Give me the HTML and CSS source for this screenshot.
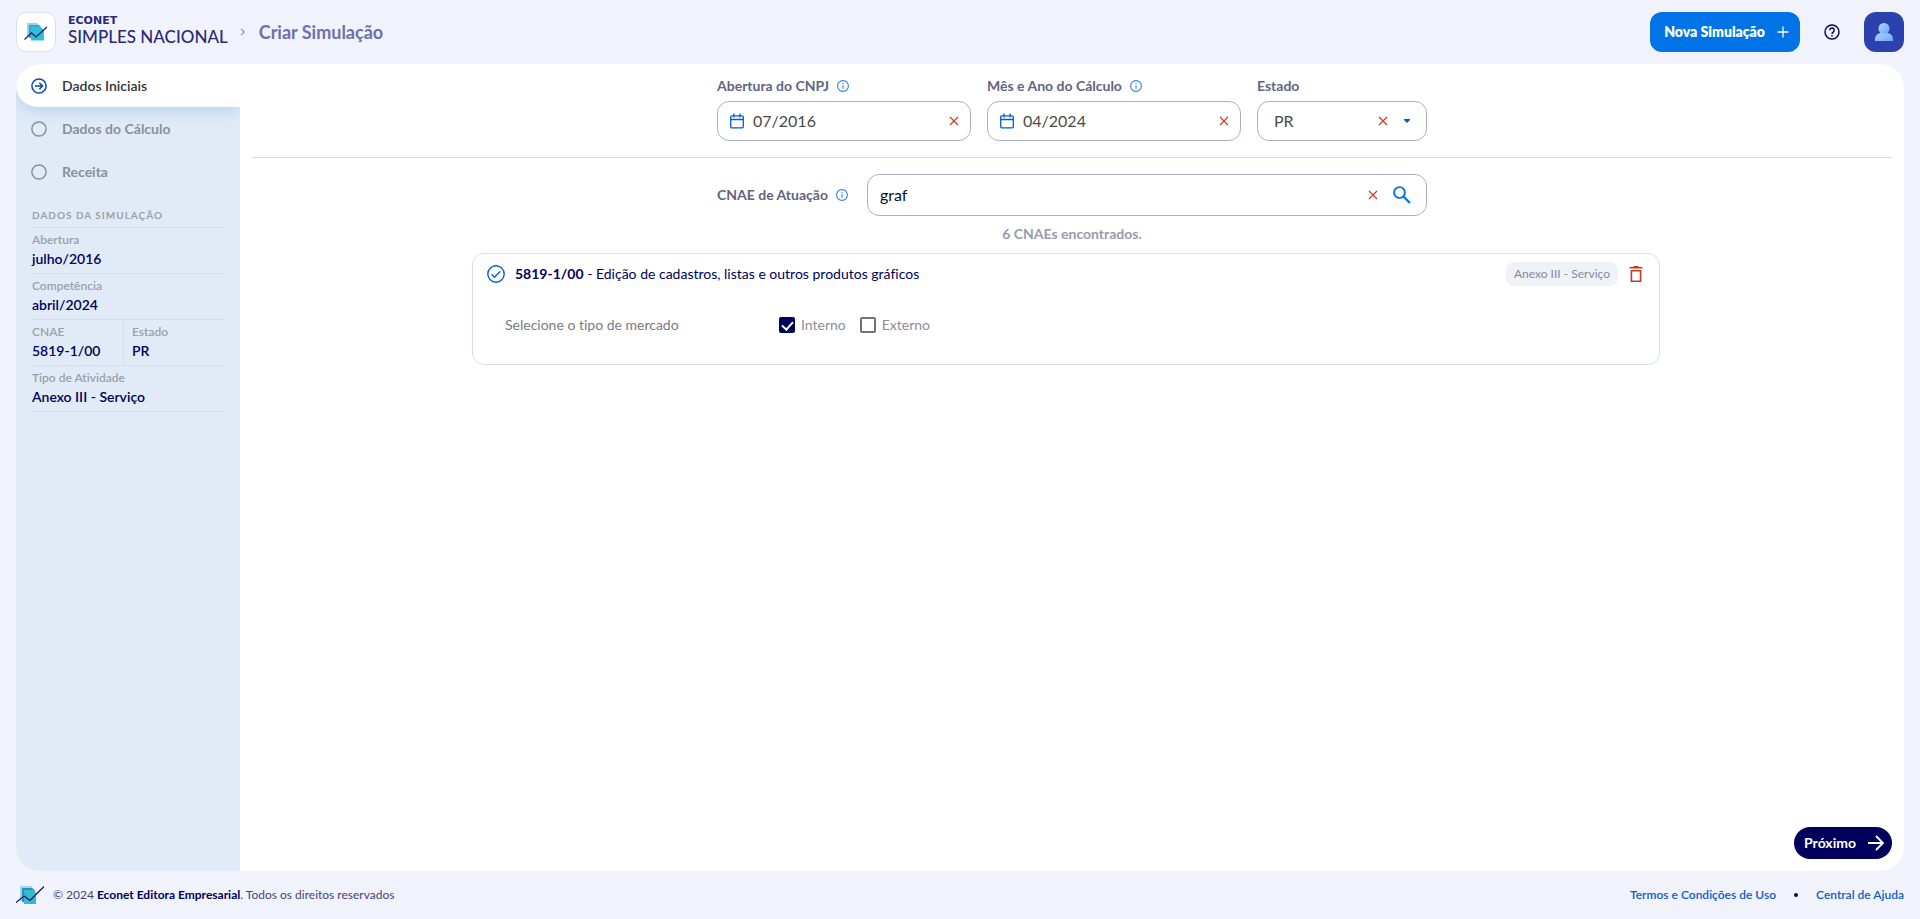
FILE: index.html
```html
<!DOCTYPE html>
<html lang="pt-BR">
<head>
<meta charset="utf-8">
<meta name="viewport" content="width=device-width, initial-scale=1">
<title>Econet Simples Nacional - Criar Simulação</title>
<link rel="stylesheet" href="styles.css">
</head>
<body>
<svg class="sprite" aria-hidden="true">
  <symbol id="i-x" viewBox="0 0 10 10"><path d="M1 1l8 8M9 1L1 9" fill="none" stroke="currentColor" stroke-width="1.2"/></symbol>
  <symbol id="i-info" viewBox="0 0 12 12"><circle cx="6" cy="6" r="5.4" fill="none" stroke="currentColor" stroke-width="1.1"/><path d="M6 5.2v3.6M6 3v1.200" stroke="currentColor" stroke-width="1.1"/></symbol>
  <symbol id="i-calendar" viewBox="0 0 14 16"><path d="M2 2.8h10a1.3 1.3 0 0 1 1.3 1.3v9.5a1.3 1.3 0 0 1-1.3 1.3H2a1.3 1.3 0 0 1-1.3-1.3V4.1A1.3 1.3 0 0 1 2 2.8zM.7 6.5h12.6M4 .5v4M10 .5v4" fill="none" stroke="currentColor" stroke-width="1.3"/></symbol>
  <symbol id="i-logo" viewBox="0 0 24 18">
    <path d="M3 0h10l3 3v11H3z" fill="#8bd9e8"/><path d="M5 2h10l2 2v11H5z" fill="#3d9fd0"/><path d="M7 3.500h9l4 3.500v10.500H7z" fill="#2cc1d8"/>
    <path d="M.5 16.500l7-6.500 4.500 4L23 4" fill="none" stroke="#1f1f6e" stroke-width="1.3"/>
  </symbol>
  <symbol id="i-mark" viewBox="0 0 28 18">
    <path d="M4 0h11l4 4v11H4z" fill="#9bd8e6"/><path d="M6 2h10l3 3v11H6z" fill="#2e8ccb"/><path d="M8 4h9l3 3v11H8z" fill="#35b9cc"/>
    <path d="M0 16.500l8-6.500 6 4.500L28 .5" fill="none" stroke="#1a1a66" stroke-width="1.3"/>
  </symbol>
</svg>

<header class="topbar">
  <a class="brand" href="#" aria-label="Econet Simples Nacional">
    <span class="brand-box"><svg width="24" height="18"><use href="#i-logo"/></svg></span>
    <span class="brand-text"><span class="brand-name">ECONET</span><span class="brand-product">SIMPLES NACIONAL</span></span>
  </a>
  <svg class="crumb-arrow" width="6" height="8" viewBox="0 0 6 8"><path d="M1.200 1l3 3-3 3" fill="none" stroke="currentColor" stroke-width="1.2"/></svg>
  <h1 class="page-title">Criar Simulação</h1>
  <div class="top-actions">
    <button class="new-button" type="button">Nova Simulação
      <svg width="12" height="12" viewBox="0 0 12 12"><path d="M6 .5v11M.5 6h11" stroke="currentColor" stroke-width="1.3"/></svg>
    </button>
    <button class="help-button" type="button" aria-label="Ajuda">
      <svg width="16" height="16" viewBox="0 0 16 16"><circle cx="8" cy="8" r="7" fill="none" stroke="currentColor" stroke-width="1.4"/><path d="M5.800 6.300a2.200 2.200 0 1 1 3.500 1.700C8.500 8.600 8 8.900 8 9.900M8 11v1.400" fill="none" stroke="currentColor" stroke-width="1.4"/></svg>
    </button>
    <button class="avatar" type="button" aria-label="Perfil">
      <svg width="18" height="18" viewBox="0 0 18 18">
        <defs><linearGradient id="g" x1="0" y1="0" x2="1" y2="1"><stop offset="0" stop-color="#b5d5ff"/><stop offset="1" stop-color="#6ba6ff"/></linearGradient></defs>
        <path d="M0 17.500v-1.500a6 6 0 0 1 6-6h6a6 6 0 0 1 6 6v1.500q0 .5-.5.5H.5q-.5 0-.5-.5z" fill="url(#g)"/><circle cx="9" cy="5.500" r="5.500" fill="url(#g)"/>
      </svg>
    </button>
  </div>
</header>

<div class="panel">
  <aside class="sidebar">
    <nav class="steps">
      <a class="step step-active" href="#"><svg width="16" height="16" viewBox="0 0 16 16"><circle cx="8" cy="8" r="7.100" fill="none" stroke="currentColor" stroke-width="1.5"/><path d="M4 8h7.500M8.300 4.700L11.600 8l-3.300 3.300" fill="none" stroke="currentColor" stroke-width="1.5"/></svg>Dados Iniciais</a>
      <a class="step" href="#"><svg width="16" height="16" viewBox="0 0 16 16"><circle cx="8" cy="8" r="7.100" fill="none" stroke="currentColor" stroke-width="1.5"/></svg>Dados do Cálculo</a>
      <a class="step" href="#"><svg width="16" height="16" viewBox="0 0 16 16"><circle cx="8" cy="8" r="7.100" fill="none" stroke="currentColor" stroke-width="1.5"/></svg>Receita</a>
    </nav>
    <section class="summary">
      <h2 class="summary-title">DADOS DA SIMULAÇÃO</h2>
      <dl class="facts">
        <div class="fact"><dt>Abertura</dt><dd>julho/2016</dd></div>
        <div class="fact"><dt>Competência</dt><dd>abril/2024</dd></div>
        <div class="fact fact-half"><dt>CNAE</dt><dd>5819-1/00</dd></div>
        <div class="fact fact-rest"><dt>Estado</dt><dd>PR</dd></div>
        <div class="fact"><dt>Tipo de Atividade</dt><dd>Anexo III - Serviço</dd></div>
      </dl>
    </section>
  </aside>

  <main class="content">
    <form class="filters">
      <div class="field">
        <label class="label" for="abertura">Abertura do CNPJ <svg width="12" height="12"><use href="#i-info"/></svg></label>
        <div class="control">
          <svg class="blue" width="14" height="16"><use href="#i-calendar"/></svg>
          <input id="abertura" type="text" value="07/2016">
          <button class="clear" type="button" aria-label="Limpar"><svg width="10" height="10"><use href="#i-x"/></svg></button>
        </div>
      </div>
      <div class="field">
        <label class="label" for="calculo">Mês e Ano do Cálculo <svg width="12" height="12"><use href="#i-info"/></svg></label>
        <div class="control">
          <svg class="blue" width="14" height="16"><use href="#i-calendar"/></svg>
          <input id="calculo" type="text" value="04/2024">
          <button class="clear" type="button" aria-label="Limpar"><svg width="10" height="10"><use href="#i-x"/></svg></button>
        </div>
      </div>
      <div class="field">
        <label class="label" for="estado">Estado</label>
        <div class="control control-state">
          <select id="estado"><option>PR</option></select>
          <button class="clear" type="button" aria-label="Limpar"><svg width="10" height="10"><use href="#i-x"/></svg></button>
          <svg class="caret" width="6" height="4" viewBox="0 0 6 4"><path d="M0 0h6v1L3 4 0 1z" fill="currentColor"/></svg>
        </div>
      </div>
    </form>

    <form class="search">
      <label class="label" for="cnae">CNAE de Atuação <svg width="12" height="12"><use href="#i-info"/></svg></label>
      <div class="control control-search">
        <input id="cnae" type="text" value="graf">
        <button class="clear" type="button" aria-label="Limpar"><svg width="10" height="10"><use href="#i-x"/></svg></button>
        <button class="find" type="button" aria-label="Buscar"><svg width="18" height="18" viewBox="0 0 18 18"><circle cx="6.500" cy="6.500" r="5.400" fill="none" stroke="currentColor" stroke-width="1.9"/><path d="M10.500 10.500l6.500 6.500" stroke="currentColor" stroke-width="2.2"/></svg></button>
      </div>
    </form>
    <p class="found">6 CNAEs encontrados.</p>

    <div class="results">
      <article class="card">
        <div class="card-head">
          <svg class="blue" width="18" height="18" viewBox="0 0 18 18"><circle cx="9" cy="9" r="8.200" fill="none" stroke="currentColor" stroke-width="1.4"/><path d="M4.600 9.300l2.900 2.900 5.900-6" fill="none" stroke="currentColor" stroke-width="1.4"/></svg>
          <p class="card-title"><strong>5819-1/00</strong> - Edição de cadastros, listas e outros produtos gráficos</p>
          <span class="tag">Anexo III - Serviço</span>
          <button class="trash" type="button" aria-label="Excluir"><svg width="14" height="16" viewBox="0 0 14 16"><path d="M.5 1.800h13M4.500.8h5" stroke="currentColor" stroke-width="1.5"/><path d="M2.400 4.700h9.200v10.500H2.400z" fill="none" stroke="currentColor" stroke-width="1.6"/></svg></button>
        </div>
        <div class="market" role="group" aria-labelledby="market-label">
          <span class="market-label" id="market-label">Selecione o tipo de mercado</span>
          <label class="check"><input type="checkbox" checked>Interno</label>
          <label class="check"><input type="checkbox">Externo</label>
        </div>
      </article>
    </div>

    <button class="next" type="button">Próximo
      <svg width="16" height="16" viewBox="0 0 16 16"><path d="M0 8h15M8 1l7 7-7 7" fill="none" stroke="currentColor" stroke-width="1.9"/></svg>
    </button>
  </main>
</div>

<footer class="footer">
  <svg width="28" height="18"><use href="#i-mark"/></svg>
  <p class="copyright">© 2024 <strong>Econet Editora Empresarial</strong>. Todos os direitos reservados</p>
  <nav class="footer-links"><a href="#">Termos e Condições de Uso</a><span class="dot"></span><a href="#">Central de Ajuda</a></nav>
</footer>
</body>
</html>
```
FILE: styles.css
```css
* { box-sizing: border-box; }
body {
  margin: 0;
  min-height: 100vh;
  display: flex;
  flex-direction: column;
  padding: 0 16px;
  background: #f0f3fb;
  color: #00005c;
  font-family: Lato, "Open Sans", sans-serif;
  font-size: 14px;
  font-variant-ligatures: none;
  line-height: 20px;
}
h1, h2, p, dl, dd { margin: 0; }
a { color: inherit; text-decoration: none; }
button, input, select { font: inherit; color: inherit; }
button { border: 0; padding: 0; background: none; cursor: pointer; font-variant-ligatures: none; }
svg { display: block; flex: none; }
.sprite { position: absolute; width: 0; height: 0; }
.blue { color: #005fd6; }

.topbar { display: flex; align-items: center; height: 64px; }
.brand { display: flex; align-items: center; gap: 12px; color: #2a2a78; }
.brand-box {
  display: flex; align-items: center; justify-content: center;
  width: 40px; height: 40px;
  border: 1px solid #d9dff0; border-radius: 10px; background: #fff;
}
.brand-text { display: flex; flex-direction: column; padding-bottom: 2px; }
.brand-name { font: bold 11px/12px "DejaVu Sans", sans-serif; }
.brand-product { font-size: 17px; font-weight: 500; line-height: 20px; }
.crumb-arrow { margin: 0 13px 0 12px; color: #8f93bf; }
.page-title { font-size: 18px; font-weight: 700; color: #6c70ae; }
.top-actions { display: flex; align-items: center; gap: 24px; margin-left: auto; }
.new-button {
  display: flex; align-items: center; gap: 12px;
  height: 40px; padding: 0 11px 0 14px;
  border-radius: 12px; background: #0073e6; color: #fff;
  font-weight: 800;
}
.avatar {
  display: flex; align-items: center; justify-content: center;
  width: 40px; height: 40px; border-radius: 12px; background: #2b41ad;
}

.panel { flex: 1; display: flex; border-radius: 24px; background: #fff; overflow: hidden; }
.sidebar { width: 224px; flex: none; background: #e1ebf7; color: #8a8f98; overflow: hidden; }
.step { display: flex; align-items: center; gap: 15px; height: 43px; padding-left: 15px; font-weight: 700; }
.step-active {
  border-radius: 24px 0 0 24px;
  background: #fff; color: #333;
  font-weight: 600;
  box-shadow: 0 4px 16px #b9d0ef;
}
.step-active svg { color: #0a4aa8; }
.summary { padding: 14px 16px; }
.summary-title { font-size: 10px; font-weight: 700; letter-spacing: 1px; line-height: 16px; padding-bottom: 4px; color: #9a9fa8; }
.facts { display: grid; grid-template-columns: 92px 1fr; border-top: 1px solid #d3deec; }
.fact { grid-column: 1 / -1; height: 46px; padding-top: 3px; border-bottom: 1px solid #d3deec; }
.fact-half { grid-column: 1; border-right: 1px solid #d3deec; }
.fact-rest { grid-column: 2; padding-left: 8px; }
.fact dt { font-size: 12px; font-weight: 600; line-height: 18px; color: #9a9fa8; }
.fact dd { font-weight: 600; line-height: 20px; color: #00005c; }

.content { flex: 1; display: flex; flex-direction: column; padding: 12px; min-width: 0; }
.filters {
  display: grid; grid-template-columns: 254px 254px 170px; justify-content: center; gap: 16px;
  padding-bottom: 16px; border-bottom: 1px solid #d7dbe8;
}
.label { display: flex; align-items: center; gap: 8px; font-weight: 700; color: #5f6482; white-space: nowrap; }
.label svg { color: #2f7df0; }
.field .label { height: 25px; padding-bottom: 5px; }
.control {
  display: flex; align-items: center; gap: 9px;
  height: 40px; padding: 0 11px 0 12px;
  border: 1px solid #a9b0c3; border-radius: 12px;
  background: #fff; color: #4a4a4a;
}
.control input, .control select {
  flex: 1; min-width: 0; padding: 0; border: 0; outline: 0;
  background: none; font-size: 16px; appearance: none;
}
.clear { color: #cc3a24; }
.control-state { gap: 16px; padding: 0 16px; }
.caret { color: #005fd6; }
.search { display: flex; justify-content: center; width: 710px; margin: 16px auto 0; }
.control-search { flex: 1; gap: 15px; height: 42px; margin-left: auto; padding: 0 15px 0 12px; color: #111; }
.search .label { width: 150px; }
.find { color: #0073e6; }
.found { margin-top: 8px; text-align: center; font-weight: 700; color: #969cab; }

.results { padding-right: 12px; margin-top: 9px; }
.card { max-width: 1188px; min-height: 112px; margin: 0 auto; padding: 8px 15px 8px 14px; border: 1px solid #d6deee; border-radius: 12px; }
.card-head { display: flex; align-items: center; gap: 10px; height: 24px; }
.card-title { flex: 1; }
.tag { padding: 0 8px; border-radius: 8px; background: #eff2f8; color: #858a9a; font-size: 12px; line-height: 24px; }
.trash { padding: 0 1px; color: #d0361f; }
.market { display: flex; align-items: center; gap: 14px; margin-top: 29px; padding-left: 18px; color: #777b85; }
.market-label { width: 260px; }
.check { display: flex; align-items: center; gap: 6px; color: #8c8f96; }
.check input {
  appearance: none; display: grid; place-items: center;
  width: 16px; height: 16px; margin: 0;
  border: 2px solid #70737a; border-radius: 2px; background: #fff;
}
.check input:checked { border-color: #00005c; background: #00005c; }
.check input:checked::before {
  content: ""; width: 5px; height: 9px; margin-bottom: 2px;
  border: solid #fff; border-width: 0 2px 2px 0; transform: rotate(42deg);
}
.next {
  display: flex; align-items: center; gap: 12px; align-self: flex-end;
  height: 32px; margin-top: auto; padding: 0 8px 0 10px;
  border-radius: 16px; background: #00005c; color: #fff; font-weight: 700;
}

.footer { display: flex; align-items: center; gap: 9px; height: 48px; font-size: 12px; }
.copyright { color: #44447c; }
.copyright strong { color: #00005c; }
.footer-links { display: flex; align-items: center; gap: 18px; margin-left: auto; font-weight: 600; color: #0d5bd0; }
.dot { width: 4px; height: 4px; border-radius: 50%; background: #111; }
```
